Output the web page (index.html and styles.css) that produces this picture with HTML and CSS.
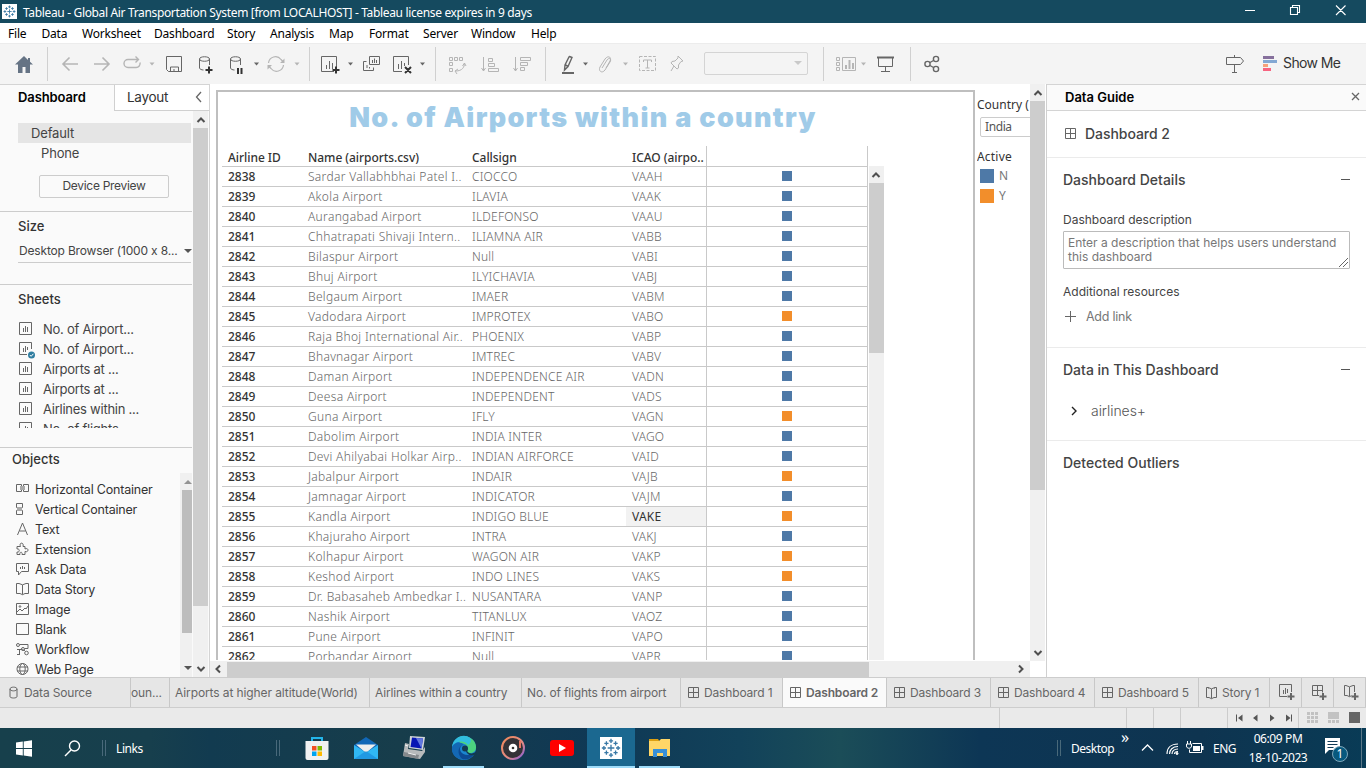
FILE: index.html
```html
<!DOCTYPE html>
<html lang="en">
<head>
<meta charset="utf-8">
<title>Tableau - Global Air Transportation System</title>
<link rel="stylesheet" href="styles.css">
</head>
<body>
<svg class="defs" width="0" height="0">
  <symbol id="logo" viewBox="0 0 24 24"><path d="M12 8v8M8 12h8M12 1v5M9.500 3.500h5M12 18v5M9.500 20.500h5M1 12h5M3.500 9.500v5M18 12h5M20.500 9.500v5M6.500 4v5M4 6.500h5M17.500 4v5M15 6.500h5M6.500 15v5M4 17.500h5M17.500 15v5M15 17.500h5"/></symbol>
  <symbol id="sheet" viewBox="0 0 14 14"><path d="M.5.5h12v12H.5zM4.500 6v4M6.500 4v6M8.500 5v5"/></symbol>
  <symbol id="grid" viewBox="0 0 13 13"><path d="M1.500 1.500h10v10h-10zM6.500 1.500v10M1.500 6.500h10"/></symbol>
  <symbol id="book" viewBox="0 0 13 14"><path d="M3 1.500H1.500v10H4l2.500 1.200L9 11.500h2.500v-10H10M3 1.500l3.500 1.300L10 1.500M6.500 3v9.500M3.500 1.500v1M9.500 1.500v1"/></symbol>
  <symbol id="up" viewBox="0 0 10 8"><path d="M1.500 6 5 2.500 8.500 6"/></symbol>
</svg>
<div class="app">
  <header class="titlebar">
    <span class="app-icon"><svg width="13" height="13"><use href="#logo"/></svg></span>
    <span class="title-text">Tableau - Global Air Transportation System [from LOCALHOST] - Tableau license expires in 9 days</span>
    <svg class="winbtns" width="116" height="23" viewBox="0 0 116 23"><path d="M0 10.500h10M45.500 7.500h7v7h-7zM47.500 7V5.500h7v7H53M91 5.500l9.500 9.500M100.500 5.500 91 15"/></svg>
  </header>
  <nav class="menubar"><span class="m1">File</span><span class="m2">Data</span><span class="m3">Worksheet</span><span class="m4">Dashboard</span><span class="m5">Story</span><span class="m6">Analysis</span><span class="m7">Map</span><span class="m8">Format</span><span class="m9">Server</span><span class="m10">Window</span><span class="m11">Help</span></nav>
  <div class="toolbar">
    <svg class="home" width="48" height="41" viewBox="0 0 48 41"><path d="M24 13 15 21.500h3V30h4.500v-6h3v6H30v-8.500h3l-3-2.700V15h-2v2z"/><path class="sep" d="M47.500 4v34"/></svg>
    <svg class="t dim" width="109" height="41" viewBox="48 0 109 41"><g stroke-width="1.600"><path d="M78 21H63m6.500-6.500L63 21l6.500 6.500M94 21h15m-6.500-6.500L109 21l-6.500 6.500"/></g><path stroke-width="1.400" d="M130 16.500h-2a4 4 0 0 0 0 8h8a4 4 0 0 0 4-5M128 16.500h10.500m-3-3 3 3-3 3"/><path class="f" d="M149.500 19.500h5l-2.500 3z"/></svg>
    <svg class="t" width="100" height="41" viewBox="157 0 100 41"><path d="M166.500 13.500h15v15h-13l-2-2zM170.500 28v-4h8v4M174 26v2M205.500 16v9c0 1 2 2 4 2" class="hide"/><path d="M166.500 13.500h15v15h-13l-2-2zM170.500 28v-4h8v4M174 26v2M199.500 16v9c0 1 2 2 4 2M209.500 16v6M199.500 16c0-3 10-3 10 0s-10 3-10 0M230.500 16v9c0 1 2 2 4 2M240.500 16v6M230.500 16c0-3 10-3 10 0s-10 3-10 0"/><path class="bold" d="M209 23.500v7M205.500 27h7M238 25v6M241.500 25v6"/><path class="f" d="M254 19.500h5l-2.500 3z"/></svg>
    <svg class="t dim" width="53" height="41" viewBox="257 0 53 41"><path class="dark f" d="M257 19.500h2l-2.500 3z"/><path stroke-width="1.200" d="M268.500 20a7 7 0 0 1 12.500-3.500l2 2M283.500 22a7 7 0 0 1-12.500 3.500l-2-2"/><path class="f" d="M284.500 15.500v4.500H280zM267.500 26.500V22h4.500z"/><path class="f" d="M294.500 19.500h5l-2.500 3z"/><path class="sep" d="M309.500 4v34"/></svg>
    <svg class="t" width="126" height="41" viewBox="310 0 126 41"><path d="M334 28.500h-12.500v-15h15V24M326.500 22v4M329.500 18v8M332.500 20v6M366.500 18.500h-3v9h10v-3M369.500 13.500h10v8h-10zM372.500 17v3M374.500 15.500v4.500M376.500 17v3M367 22v3M369.500 24v1.500M402 28.500h-8.500v-15h15V22M398.500 21v5M401.500 18v8M404.500 20v3"/><path class="bold" d="M336 23.500v7M332.500 27h7M405 24l6 6M411 24l-6 6"/><path class="f" d="M348 19.500h5l-2.500 3zM420 19.500h5l-2.500 3z"/><path class="sep" d="M435.500 4v34"/></svg>
    <svg class="t dim" width="110" height="41" viewBox="436 0 110 41"><path d="M449.500 14.500h3v3h-3zM454.500 14.500h3v3h-3zM459.500 14.500h3v3h-3zM449.500 19.500h3v3h-3zM449.500 25.500h3v3h-3zM464.500 20c0 4-2 8-9 8m7-5 2-3 1.500 3M458 26l-3 2 2 3M483.500 14v14m-2-3 2 3 2-3M488.500 15.500h4v3h-4zM488.500 20.500h6v3h-6zM488.500 25.500h10v3h-10zM515.500 14v14m-2-3 2 3 2-3M520.500 14.500h10v3h-10zM520.500 19.500h7v3h-7zM520.500 24.500h4v3h-4z"/><path class="sep" d="M545.500 4v34"/></svg>
    <svg class="t" width="44" height="41" viewBox="546 0 44 41"><path stroke-width="1.400" d="M569.500 13.500l2.500 1-4 9-3.500 3.500.5-5 4-8zM565.500 22l3 1.500"/><path stroke-width="2" d="M562 30h12"/><path class="f" d="M583 19.500h5l-2.500 3z"/></svg>
    <svg class="t dim" width="110" height="41" viewBox="590 0 110 41"><path d="M602 25l5-8c2-3 5-1 3 2l-5 8c-3 4-7 1-5-3l5-8c3-4 7-2 5 2l-4 7"/><path class="f" d="M623 19.500h5l-2.500 3z"/><path stroke-dasharray="3 1.500" d="M639.500 13.500h16v14h-16z"/><path d="M643.500 19v-2h8v2M647.500 17v8M645.500 25h4M678 13l5 5-2 .5-2.500 3.500v3l-1.500 1-6-6 1-1.500 3-.5 3-3zM674 23 671 28"/></svg>
    <div class="combo"><i></i></div>
    <svg class="t dim" width="60" height="41" viewBox="808 0 60 41"><path class="sep" d="M823.500 4v34"/><path d="M836.500 14.500h3v3h-3zM836.500 19.500h3v3h-3zM836.500 24.500h3v3h-3zM842.500 14.500h13v13h-13z"/><path stroke-width="2" d="M846 22v4M849.500 17v9M853 20v6"/><path class="f" d="M861 19.500h5l-2.500 3z"/></svg>
    <svg class="t" width="90" height="41" viewBox="868 0 90 41"><path stroke-width="2" d="M877 14.500h17"/><path d="M878.500 15v8.500h14V15M885.500 24v4M881 28.500h9"/><path class="sep" d="M910.500 4v34"/><g stroke-width="1.400"><circle cx="927.500" cy="21" r="2.600"/><circle cx="936" cy="16" r="2.600"/><circle cx="936" cy="26" r="2.600"/><path d="M930 19.500l3.500-2M930 22.500l3.500 2"/></g></svg>
    <svg class="t guide" width="22" height="41" viewBox="1224 0 22 41"><path d="M1226.500 14.500h14l3 3.500-3 3.500h-14zM1234.500 12v2M1234.500 22v7M1232 29.500h5"/></svg>
    <svg class="show" width="14" height="41" viewBox="0 0 14 41"><path fill="#86709c" d="M0 13h11v3H0z"/><path fill="#83a8d3" d="M0 17h14v3H0z"/><path fill="#f5a17a" d="M0 21h5v3H0z"/><path fill="#f76480" d="M0 25h8v3H0z"/></svg>
    <span class="showme">Show Me</span>
  </div>

  <main class="work">
    <aside class="left">
      <div class="ltabs"><b>Dashboard</b><div class="ltab2">Layout<svg class="ln" width="8" height="12"><path stroke-width="1.300" d="M6 1 1.500 6 6 11"/></svg></div></div>
      <div class="lbody">
        <div class="lcontent">
          <section class="devices"><div class="dev sel">Default</div><div class="dev phone">Phone</div><div class="preview">Device Preview</div></section>
          <section class="size"><h3>Size</h3><div class="sizebox"><span>Desktop Browser (1000 x 8...</span><i class="tri"></i></div></section>
          <section class="sheets"><h3>Sheets</h3>
            <div class="sheetlist">
              <div><svg class="ln" width="14" height="14"><use href="#sheet"/></svg><span>No. of Airport...</span></div>
              <div class="used"><svg class="ln" width="18" height="18" viewBox="0 0 18 18"><path d="M8 12.500H.5V.5h12V7M4.500 6v4M6.500 4v6M8.500 5v3"/><circle cx="12.500" cy="13" r="3.500" fill="#2f7da0" stroke="none"/><path d="m10.800 13 1.300 1.300 2.300-2.500" stroke="#fff"/></svg><span>No. of Airport...</span></div>
              <div><svg class="ln" width="14" height="14"><use href="#sheet"/></svg><span>Airports at ...</span></div>
              <div><svg class="ln" width="14" height="14"><use href="#sheet"/></svg><span>Airports at ...</span></div>
              <div><svg class="ln" width="14" height="14"><use href="#sheet"/></svg><span>Airlines within ...</span></div>
              <div><svg class="ln" width="14" height="14"><use href="#sheet"/></svg><span>No. of flights ...</span></div>
            </div>
          </section>
          <section class="objects">
            <div class="objmain"><h3>Objects</h3>
              <div class="obj"><svg class="ln" width="14" height="14"><path d="M.5 2.500h5v7h-5zM7.500 2.500h5v7h-5z"/><path fill="#aaa" stroke="none" d="M4 4h5v4H4z"/></svg>Horizontal Container</div>
              <div class="obj"><svg class="ln" width="14" height="14"><path d="M.5 1.500h6v4h-6zM.5 8.500h6v4h-6z"/><path fill="#aaa" stroke="none" d="M1 5h5v4H1z"/></svg>Vertical Container</div>
              <div class="obj"><svg class="ln" width="14" height="14"><path d="M1.500 13 6.500 1l5 12M3.500 9h6"/></svg>Text</div>
              <div class="obj"><svg class="ln" width="14" height="14"><path d="M1 4.500h3.500c-2-4.500 4-4.500 2.500 0h2V7c4-2 4 4 0 2.500v3H6c1-3-3-3-2 0H1V10c3 1 3-4 0-3z"/></svg>Extension</div>
              <div class="obj"><svg class="ln" width="14" height="14"><path d="M.5 1.500h12v8h-7L2.500 13V9.500h-2zM4.500 5v2M6.500 4v3M8.500 5v2"/></svg>Ask Data</div>
              <div class="obj"><svg class="ln" width="14" height="14"><path d="M3 1.500H.5v10H4l2.500 1.200L9 11.500h3.500v-10H10M3 1.500l3.500 1.300L10 1.500M6.500 3v9.500"/></svg>Data Story</div>
              <div class="obj"><svg class="ln" width="14" height="14"><path d="M.5 1.500h12v11H.5zM1 10l3-3 2 2 3-3 1 1 2-3"/><circle cx="4" cy="4.500" r=".8"/></svg>Image</div>
              <div class="obj"><svg class="ln" width="14" height="14"><path d="M.5 1.500h12v11H.5z"/></svg>Blank</div>
              <div class="obj"><svg class="ln" width="14" height="14"><circle cx="2" cy="3" r="1.500"/><path d="M4 2.500h8v4H9M1 7.500h4l4 1M3.500 8v5M1 12.500h3"/><circle cx="7" cy="7" r="1.500"/><circle cx="10.500" cy="11" r="1.800"/></svg>Workflow</div>
              <div class="obj"><svg class="ln" width="14" height="14"><circle cx="6.500" cy="7" r="5.500"/><ellipse cx="6.500" cy="7" rx="2.700" ry="5.500"/><path d="M1 5h11M1 9h11"/></svg>Web Page</div>
            </div>
            <div class="minibar"><i class="tri upt"></i><div class="minithumb"></div><i class="tri"></i></div>
          </section>
        </div>
        <div class="vbar"><svg class="arw" width="10" height="8"><use href="#up"/></svg><div class="vthumb lt"></div><svg class="arw flip" width="10" height="8"><use href="#up"/></svg></div>
      </div>
    </aside>

    <section class="center">
      <div class="viewport">
        <div class="canvas">
          <div class="frame">
            <h1><span>No. of Airports within a country</span></h1>
            <div class="viz">
              <table>
                <colgroup><col class="c1"><col class="c2"><col class="c3"><col class="c4"><col class="c5"></colgroup>
                <thead><tr><th>Airline ID</th><th>Name (airports.csv)</th><th>Callsign</th><th>ICAO (airpo..</th><th></th></tr></thead>
                <tbody>
                <tr><th>2838</th><td>Sardar Vallabhbhai Patel I..</td><td>CIOCCO</td><td>VAAH</td><td><i></i></td></tr>
                <tr><th>2839</th><td>Akola Airport</td><td>ILAVIA</td><td>VAAK</td><td><i></i></td></tr>
                <tr><th>2840</th><td>Aurangabad Airport</td><td>ILDEFONSO</td><td>VAAU</td><td><i></i></td></tr>
                <tr><th>2841</th><td>Chhatrapati Shivaji Intern..</td><td>ILIAMNA AIR</td><td>VABB</td><td><i></i></td></tr>
                <tr><th>2842</th><td>Bilaspur Airport</td><td>Null</td><td>VABI</td><td><i></i></td></tr>
                <tr><th>2843</th><td>Bhuj Airport</td><td>ILYICHAVIA</td><td>VABJ</td><td><i></i></td></tr>
                <tr><th>2844</th><td>Belgaum Airport</td><td>IMAER</td><td>VABM</td><td><i></i></td></tr>
                <tr class="y"><th>2845</th><td>Vadodara Airport</td><td>IMPROTEX</td><td>VABO</td><td><i></i></td></tr>
                <tr><th>2846</th><td>Raja Bhoj International Air..</td><td>PHOENIX</td><td>VABP</td><td><i></i></td></tr>
                <tr><th>2847</th><td>Bhavnagar Airport</td><td>IMTREC</td><td>VABV</td><td><i></i></td></tr>
                <tr><th>2848</th><td>Daman Airport</td><td>INDEPENDENCE AIR</td><td>VADN</td><td><i></i></td></tr>
                <tr><th>2849</th><td>Deesa Airport</td><td>INDEPENDENT</td><td>VADS</td><td><i></i></td></tr>
                <tr class="y"><th>2850</th><td>Guna Airport</td><td>IFLY</td><td>VAGN</td><td><i></i></td></tr>
                <tr><th>2851</th><td>Dabolim Airport</td><td>INDIA INTER</td><td>VAGO</td><td><i></i></td></tr>
                <tr><th>2852</th><td>Devi Ahilyabai Holkar Airp..</td><td>INDIAN AIRFORCE</td><td>VAID</td><td><i></i></td></tr>
                <tr class="y"><th>2853</th><td>Jabalpur Airport</td><td>INDAIR</td><td>VAJB</td><td><i></i></td></tr>
                <tr><th>2854</th><td>Jamnagar Airport</td><td>INDICATOR</td><td>VAJM</td><td><i></i></td></tr>
                <tr class="y"><th>2855</th><td>Kandla Airport</td><td>INDIGO BLUE</td><td class="hot">VAKE</td><td><i></i></td></tr>
                <tr><th>2856</th><td>Khajuraho Airport</td><td>INTRA</td><td>VAKJ</td><td><i></i></td></tr>
                <tr class="y"><th>2857</th><td>Kolhapur Airport</td><td>WAGON AIR</td><td>VAKP</td><td><i></i></td></tr>
                <tr class="y"><th>2858</th><td>Keshod Airport</td><td>INDO LINES</td><td>VAKS</td><td><i></i></td></tr>
                <tr><th>2859</th><td>Dr. Babasaheb Ambedkar I..</td><td>NUSANTARA</td><td>VANP</td><td><i></i></td></tr>
                <tr><th>2860</th><td>Nashik Airport</td><td>TITANLUX</td><td>VAOZ</td><td><i></i></td></tr>
                <tr><th>2861</th><td>Pune Airport</td><td>INFINIT</td><td>VAPO</td><td><i></i></td></tr>
                <tr><th>2862</th><td>Porbandar Airport</td><td>Null</td><td>VAPR</td><td><i></i></td></tr>
                </tbody>
              </table>
              <div class="vbar tablebar"><svg class="arw" width="10" height="8"><use href="#up"/></svg><div class="vthumb tt"></div></div>
            </div>
          </div>
          <div class="legend"><div class="lh">Country (</div><div class="sel-in">India</div><div class="lh act">Active</div><div class="li"><i></i>N</div><div class="li yy"><i></i>Y</div></div>
        </div>
        <div class="vbar"><svg class="arw" width="10" height="8"><use href="#up"/></svg><div class="vthumb ct"></div><svg class="arw flip" width="10" height="8"><use href="#up"/></svg></div>
      </div>
      <div class="hbar"><svg class="arw lft" width="10" height="8"><use href="#up"/></svg><div class="hthumb"></div><svg class="arw rgt" width="10" height="8"><use href="#up"/></svg></div>
    </section>

    <aside class="guidepane">
      <div class="ghead"><b>Data Guide</b><svg class="ln" width="9" height="9"><path stroke-width="1.300" d="m1 1 7 7M8 1 1 8"/></svg></div>
      <div class="gname"><svg class="ln" width="13" height="13"><use href="#grid"/></svg><span>Dashboard 2</span></div>
      <div class="gsec det"><h2><span>Dashboard Details</span><i></i></h2><p>Dashboard description</p><div class="ta">Enter a description that helps users understand this dashboard<svg class="ln" width="9" height="9"><path d="M0 9 9 0M4 9l5-5"/></svg></div><p>Additional resources</p><div class="add"><svg class="ln" width="12" height="12"><path d="M6.500 1v11M1 6.500h11"/></svg>Add link</div></div>
      <div class="gsec dat"><h2><span>Data in This Dashboard</span><i></i></h2><div class="src"><svg class="ln" width="6" height="10"><path d="m1 1 4 4-4 4" stroke="#222" stroke-width="1.400"/></svg>airlines+</div></div>
      <div class="gsec out"><h2><span>Detected Outliers</span></h2></div>
    </aside>
  </main>

  <div class="tabs">
    <div class="ds"><svg class="ln" width="10" height="13"><path d="M1 3v7.500c0 2 7 2 7 0V3M1 3c0-2.500 7-2.500 7 0s-7 2.500-7 0"/></svg>Data Source</div>
    <div class="w39">oun...</div><div class="w200">Airports at higher altitude(World)</div><div class="w151">Airlines within a country</div><div class="w160">No. of flights from airport</div>
    <div class="w102"><svg class="ln" width="13" height="13"><use href="#grid"/></svg>Dashboard 1</div>
    <div class="w104 on"><svg class="ln" width="13" height="13"><use href="#grid"/></svg>Dashboard 2</div>
    <div class="w104"><svg class="ln" width="13" height="13"><use href="#grid"/></svg>Dashboard 3</div>
    <div class="w104"><svg class="ln" width="13" height="13"><use href="#grid"/></svg>Dashboard 4</div>
    <div class="w104"><svg class="ln" width="13" height="13"><use href="#grid"/></svg>Dashboard 5</div>
    <div class="w71"><svg class="ln" width="13" height="14"><use href="#book"/></svg>Story 1</div>
    <div class="w32"><svg class="ln" width="17" height="17"><path d="M8 12.500H.5V.5h12V8M4.500 6v4M6.500 4v6M8.500 5v4"/><path stroke-width="2" d="M12 9v7M8.500 12.500h7"/></svg></div>
    <div class="w32"><svg class="ln" width="17" height="17"><path d="M8 11.500H1.500V1.500h10v7M6.500 1v11M1 6.500h11"/><path stroke-width="2" d="M12 9v7M8.500 12.500h7"/></svg></div>
    <div class="w32"><svg class="ln" width="17" height="17"><path d="M3 1.500H1.500v10H4l2.500 1.200 2-1M3 1.500l3.500 1.300L10 1.500h1.500V8M6.500 3v9.500"/><path stroke-width="2" d="M12 9v7M8.500 12.500h7"/></svg></div>
  </div>
  <div class="status"><div class="s1"></div><div class="s2"></div><div class="s3"></div><div class="s3"></div><div class="s4"></div>
    <div class="s5"><svg width="58" height="10"><path d="M1 1.500h1v7H1zM7.500 1.500v7L3 5zM22.500 1.500v7L18 5zM35 1.500v7L39.500 5zM51 1.500v7L55.500 5zM56 1.500h1v7h-1z"/></svg></div>
    <svg width="54" height="12" viewBox="0 0 54 12"><path fill="#c2c2c2" d="M0 0h3v3H0zM4 0h3v3H4zM8 0h3v3H8zM0 4h3v3H0zM4 4h3v3H4zM8 4h3v3H8zM0 8h3v3H0zM4 8h3v3H4zM8 8h3v3H8zM21 0h11v7H21zM21 8h3v3h-3zM25 8h3v3h-3zM29 8h3v3h-3z"/><path fill="#666" d="M42 0h11v11H42z"/></svg>
  </div>

  <footer class="taskbar">
    <svg class="start" width="17" height="17" viewBox="0 0 17 17"><path fill="#fff" d="M0 2.500 6.800 1.600V8H0zM7.700 1.500 16 .3V8H7.700zM0 8.900h6.800v6.500L0 14.500zM7.700 8.900H16v7.800l-8.300-1.200z"/></svg>
    <svg class="search" width="17" height="17" viewBox="0 0 17 17"><circle cx="10.500" cy="6" r="5"/><path d="M7 10 1 16"/></svg>
    <i class="grip g1"></i><span class="links">Links</span><i class="grip g2"></i>
    <div class="app-btn"><svg width="26" height="26" viewBox="0 0 26 26"><path d="M8 7V3h10v4" fill="none" stroke="#23b5ea" stroke-width="2"/><path fill="#f1f1f1" d="M1.500 6h23v17a2 2 0 0 1-2 2h-19a2 2 0 0 1-2-2z"/><path fill="#f25022" d="M8 11h4.500v4.500H8z"/><path fill="#7fba00" d="M13.500 11H18v4.500h-4.500z"/><path fill="#00a4ef" d="M8 16.500h4.500V21H8z"/><path fill="#ffb900" d="M13.500 16.500H18V21h-4.500z"/></svg></div>
    <div class="app-btn"><svg width="26" height="26" viewBox="0 0 26 26"><path fill="#1167b7" d="M1 10 13 2l12 8v6H1z"/><path fill="#eee" d="M3 9.500h20L13 18z"/><path fill="#30b7f3" d="M1 10l12 7.500L25 10v14H1z"/><path fill="#1686d9" d="M1 24 13 16l12 8z" opacity=".6"/></svg></div>
    <div class="app-btn pc"><svg width="26" height="26" viewBox="0 0 26 26"><path fill="#cfd4d8" d="m9 1 15 1-2 13-14-2z"/><path fill="#0716b4" d="m11 2.500 11 1-1.500 10-11-1.500z"/><path fill="#6178df" d="m15 3 7 .5-1.500 10z"/><path fill="#b7babb" d="m4 8 4 1-1 5 14 2 3-4v5l-5 7-17-3z"/><path fill="#85898c" d="m3 17 15 3-1 4-15-3z"/><path stroke="#f4f4f4" d="m4 10 3 1M7 18l8 2"/></svg></div>
    <div class="app-btn run"><svg width="26" height="26" viewBox="0 0 26 26"><circle cx="13" cy="13" r="12" fill="#1b86d0"/><path fill="#4cd27f" d="M6 3.300C14-2 26 4 25 13c-.5 5-6 6-9 4 3-5-1-9-7-9z"/><path fill="#31bddf" d="M1 12C2 2 13-2 19 3c2 3 0 6-2 7C13 4 4 6 1 12z"/><path fill="#1468b4" d="M1 12c2-5 9-6 12-2-6 1-6 9 0 14C6 25 0 20 1 12z"/><path fill="#0c4a94" d="M10 11c-3 4 1 12 13 8-3 5-8 6-11 5.500C7 21 6 14 10 11z"/><circle cx="14" cy="13.500" r="3" fill="#123a50"/><path fill="#123a50" d="m15 15 3 3c3 1 5 0 8-2v3l-3 1c-4 1-8-1-8-5z"/></svg></div>
    <div class="app-btn"><svg width="26" height="26" viewBox="0 0 26 26"><defs><linearGradient id="ring" x2="1" y2="1"><stop stop-color="#f18959"/><stop offset=".6" stop-color="#e28a85"/><stop offset="1" stop-color="#8059dc"/></linearGradient></defs><circle cx="13" cy="13" r="11" fill="#333237" stroke="url(#ring)" stroke-width="2"/><path stroke="#e77662" stroke-width="2" d="M20 6v7"/><circle cx="13" cy="13" r="4.300" fill="#fff"/><circle cx="13" cy="13" r="1.300" fill="#333"/></svg></div>
    <div class="app-btn"><svg width="26" height="26" viewBox="0 0 26 26"><rect x="1" y="5" width="24" height="16" rx="3" fill="#f00"/><path fill="#fff" d="m10 9 7 4-7 4z"/></svg></div>
    <div class="app-btn run active"><span class="tb"><svg width="20" height="20"><use href="#logo"/></svg></span></div>
    <div class="app-btn run"><svg width="26" height="26" viewBox="0 0 26 26"><path fill="#dda013" d="M2 4h9l2 3H2z"/><path fill="#ffd667" d="M2 6h10l2-2h9v17H2z"/><path fill="#3790d8" d="M6 14h14v8h-4v-4h-6v4H6z"/></svg></div>
    <div class="tray"><i class="grip"></i><span class="desk">Desktop</span><span class="more">»</span>
      <svg class="sys" width="66" height="20" viewBox="0 0 66 20"><path stroke-width="1.300" d="m1 12.500 5.500-5.500 5.500 5.500"/><path d="M26 16c0-6 4-10 11-10M28.500 16c0-4 3-7.500 8.500-7.500M31 16c0-3 2-5 6-5M33.500 16c0-2 1-2.500 3.500-2.500" stroke-width="1.100"/><circle cx="36" cy="15.500" r="1" fill="#fff"/><path d="M51.500 5.500h9v9h-12v-3M49.500 3v3M46.500 3v3M45.500 6h5v2c0 3-5 3-5 0z"/><path fill="#fff" stroke="none" d="M52 8h7v5h-7zM61 8h1.500v4H61z"/></svg>
      <span class="eng">ENG</span><span class="clock">06:09 PM<br>18-10-2023</span>
      <svg class="note" width="24" height="26" viewBox="0 0 24 26"><path fill="#fff" d="M1 1h15v12H5l-4 4z"/><path stroke="#123a55" d="M3.500 4.500h10M3.500 7.500h10M3.500 10.500h6"/><circle cx="16" cy="17" r="7.500" fill="#07597e" stroke="#7fa8bb"/><text x="16" y="21">1</text></svg>
      <i class="peek"></i>
    </div>
  </footer>
</div>
</body>
</html>
```
FILE: styles.css
```css
*{box-sizing:border-box}
body{margin:0;font-family:Inter,"Noto Sans",sans-serif;font-size:13px;color:#444;overflow:hidden}
h1,h2,h3,p{margin:0;font-weight:500}
svg{display:block;flex:none}
.defs{position:absolute}
.hide{display:none}
i{display:block;flex:none}
.app{width:1366px;height:768px;display:flex;flex-direction:column;background:#fff;overflow:hidden;white-space:nowrap}
.titlebar{height:23px;flex:none;background:#154a5f;color:#fff;display:flex;align-items:center;font:12px "Noto Sans",sans-serif;padding-left:2px}
.app-icon{width:15px;height:15px;background:#fff;padding:1px;flex:none}
.app-icon svg,.tb svg{stroke:#3878a5;stroke-width:1.600}
.title-text{margin-left:6px;width:520px;letter-spacing:-.345px;padding-top:1px}
.winbtns{margin-left:702px;fill:none;stroke:#fff;stroke-width:1.100}
.menubar{height:20px;flex:none;display:flex;align-items:center;color:#000;font:12px "Noto Sans",sans-serif;letter-spacing:-.2px;padding-left:8px}
.menubar span{flex:none}
.m1{width:33.500px}.m2{width:40.500px}.m3{width:72px}.m4{width:73px}.m5{width:43px}.m6{width:59px}.m7{width:40px}.m8{width:54px}.m9{width:48px}.m10{width:60px}
.toolbar{height:41px;flex:none;background:#f4f4f4;border-top:1px solid #ececec;display:flex;align-items:center;padding-bottom:2px}
.home{fill:#657384}
.t,.ln{fill:none;stroke:#666;stroke-width:1}
.t .f{fill:#666;stroke:none}
.dim{stroke:#b5b5b5}
.dim .f{fill:#b5b5b5}
.t .dark{fill:#666}
.t .bold{stroke:#333;stroke-width:2}
.toolbar .sep{fill:none;stroke:#d0d0d0;stroke-width:1}
.combo{width:104px;height:23px;margin:0 0 0 4px;border:1px solid #d4d4d4;border-radius:2px;display:flex;justify-content:flex-end;align-items:center;padding-right:5px}
.combo i{border:4px solid transparent;border-top-color:#c9c9c9;border-bottom:0}
.guide{margin-left:266px}
.show{margin-left:17px}
.showme{margin-left:6px;font-size:14px;color:#333;letter-spacing:-.600px;word-spacing:0;padding-bottom:1px}
.work{height:593px;flex:none;display:flex}
.left{width:210px;flex:none;background:#fafafa;border-right:1px solid #d4d4d4;border-top:1px solid #d4d4d4}
.ltabs{height:26px;display:flex}
.ltabs b{width:114px;padding-left:18px;font:600 13px/24px Inter,sans-serif;color:#000;letter-spacing:-.1px}
.ltab2{flex:1;background:#fff;border-left:1px solid #d0d0d0;border-bottom:1px solid #d0d0d0;display:flex;align-items:center;justify-content:space-between;padding:0 6px 1px 12px;color:#333;font-size:13.500px;letter-spacing:-.3px}
.lbody{height:566px;display:flex}
.lcontent{width:193px;overflow:hidden}
.devices{height:101px;padding:12px 1px 0 18px;margin-right:1px;border-bottom:1px solid #ccc}
.dev{height:20px;line-height:20px;padding-left:13px;letter-spacing:-.15px}
.sel{background:#e5e5e5}
.phone{padding-left:23px}
.preview{width:130px;height:23px;margin:12px 0 0 21px;border:1px solid #ccc;border-radius:2px;text-align:center;font-size:12px;line-height:20px;letter-spacing:-.3px}
h3{font-size:13px;color:#333;line-height:20px}
.size{height:73px;margin-right:1px;border-bottom:1px solid #ccc;padding:4px 1px 0 18px}
.sizebox{height:23px;margin-top:4px;border-bottom:1px solid #ccc;display:flex;align-items:center;justify-content:space-between;font-size:12px;letter-spacing:-.17px;padding:0 0 1px 1px}
.tri{border:4px solid transparent;border-top-color:#555;border-bottom:0}
.sizebox .tri{margin-right:-1px}
.upt{transform:rotate(180deg);opacity:.6}
.sheets{height:163px;padding:4px 1px 0 18px;margin-right:1px;border-bottom:1px solid #ccc}
.sheetlist{height:109px;margin-top:10px;overflow:hidden}
.sheetlist>div{height:20px;display:flex;align-items:center;padding-left:1px;letter-spacing:-.25px}
.sheetlist svg{margin-right:10px}
.used svg{margin:4px 6px 0 0}
.objects{height:229px;display:flex}
.objmain{width:180px;padding:1px 0 0 12px}
.objmain h3{margin-bottom:10px}
.obj{height:20px;display:flex;align-items:center;font-size:12.500px;color:#333;padding-left:4px;letter-spacing:-.2px}
.obj svg{margin-right:5px}
.minibar{width:12px;height:204px;margin-top:25px;background:#f0f0f0;display:flex;flex-direction:column;align-items:flex-end;padding:7px 0 6px}
.minithumb{width:10px;height:143px;background:#bdbdbd;margin:6px 0 33px}
.vbar{width:15px;flex:none;background:#f0f0f0;display:flex;flex-direction:column;align-items:center;padding-top:5px}
.arw{fill:none;stroke:#505050;stroke-width:2}
.vthumb{width:100%;background:#cdcdcd;margin-top:4px}
.lt{height:478px}
.flip{transform:rotate(180deg);margin-top:auto;margin-bottom:4px}
.center{width:837px;height:593px;flex:none;border-right:1px solid #d0d0d0;background:#fff}
.viewport{height:577px;display:flex;padding-left:6px}
.canvas{width:814px;display:flex;overflow:hidden;height:576px}
.frame{width:759px;height:570px;margin-top:6px;flex:none;border:2px solid #bfbfbf;border-bottom:0;overflow:hidden;padding-left:4px}
h1{height:54px;text-align:center;padding-right:29px;font:900 27px/52px Inter,sans-serif;color:#a0cbe8;letter-spacing:1.310px}
.viz{display:flex}
table{width:645px;table-layout:fixed;border-collapse:collapse;font:12px "Noto Sans",sans-serif;flex:none}
.c1{width:80px}.c2{width:164px}.c3{width:160px}.c4{width:80px}.c5{width:161px}
tr{height:20px}
th,td{padding:0 0 0 6px;height:20px;line-height:19px;text-align:left;border-bottom:1px solid #c9c9c9;overflow:hidden;font-weight:500;color:#333}
thead th{padding-top:4px;line-height:15px;letter-spacing:-.05px}
td{color:#666;font-weight:300;letter-spacing:.2px}
td:nth-child(2){letter-spacing:.32px}
tr>:nth-child(4),tr>:nth-child(5){border-right:1px solid #c9c9c9}
td:last-child{padding:0}
td i{width:10px;height:10px;background:#4e79a7;margin:0 auto}
.y i{background:#f28e2b}
.hot{background:#f2f2f2;color:#333;font-weight:400}
.tablebar{height:500px;margin:20px 0 0 1px}
.tt{height:170px}
.legend{width:53px;margin-left:2px;padding-top:11px;overflow:hidden;font:12px/20px "Noto Sans",sans-serif;color:#333}
.sel-in{width:80px;height:20px;border:1px solid #ccc;border-radius:2px;margin:2px 0 0 3px;line-height:18px;padding-left:4px;color:#555;letter-spacing:-.400px}
.act{margin-top:10px;letter-spacing:.2px}
.li{height:20px;display:flex;align-items:center;color:#777;padding-left:3px;font-size:12px}
.li i{width:14px;height:14px;background:#4e79a7;margin-right:5px}
.act+.li{margin-top:-1px}
.li.yy i{background:#f28e2b}
.ct{height:389px}
.hbar{height:16px;width:820px;background:#f0f0f0;display:flex;align-items:center;padding:0 4px 0 3px}
.lft{transform:rotate(-90deg)}
.rgt{transform:rotate(90deg);margin-left:auto}
.hthumb{width:642px;height:15px;background:#cdcdcd;margin-left:4px}
.guidepane{flex:1;border-top:1px solid #d4d4d4;color:#444}
.ghead{height:26px;background:#fafafa;border-bottom:1px solid #d4d4d4;display:flex;align-items:center;justify-content:space-between;padding:0 6px 2px 18px;color:#000}
.ghead b{font-weight:600;font-size:13px}
.gname{height:47px;display:flex;align-items:center;gap:8px;padding:0 0 2px 17px;font-size:14px;font-weight:500;border-bottom:1px solid #ebebeb;letter-spacing:-.05px}
.gsec{padding:0 16px;border-bottom:1px solid #ebebeb}
.gsec h2{height:44px;display:flex;align-items:center;justify-content:space-between;font-size:14px;padding-bottom:2px}
h2 i{width:9px;height:1px;background:#555}
.det{height:190px}
.gsec p{font-size:12px;line-height:18px;font-weight:400}
.det p:first-of-type{margin-top:9px}
.ta{height:38px;width:287px;margin:2px 0 14px;border:1px solid #bbb;border-radius:1px;padding:4px;font-size:12px;line-height:14px;color:#777;white-space:normal;position:relative}
.ta svg{position:absolute;right:1px;bottom:1px}
.add{display:flex;align-items:center;height:30px;gap:10px;color:#777;font-size:12.500px;padding-left:1px;letter-spacing:-.25px}
.dat{height:93px}
.src{height:37px;display:flex;align-items:center;gap:14px;padding-left:8px;font-size:14px;font-weight:300;color:#555;letter-spacing:-.05px}
.out{border:0}
.tabs{height:31px;flex:none;display:flex;background:#e6e6e6;border-top:1px solid #cdcdcd;border-bottom:1px solid #cdcdcd;font-size:12px;color:#666;letter-spacing:-.16px}
.tabs>div{flex:none;border-right:1px solid #c8c8c8;display:flex;align-items:center;gap:4px;padding-left:6px;overflow:hidden}
.tabs .ds{width:131px;padding-left:9px;gap:5px}
.tabs .w39{width:39px;padding-left:0}
.tabs .w200,.tabs .w151,.tabs .w160{padding-left:5px}
.tabs .w200{letter-spacing:-.1px}
.w200{width:200px}.w151{width:152px}.w160{width:159px}.w102{width:102px}.w104{width:104px}.w71{width:71px}
.tabs .w32{width:32px;padding-left:9px}
.tabs .on{background:#fafafa;font-weight:600;padding-bottom:1px}
.status{height:20px;flex:none;background:#eaeaea;display:flex;align-items:center}
.status>div{height:100%;border-right:1px solid #ccc;flex:none}
.status>svg{margin-left:8px}
.s1{width:1000px}.s2{width:127px}.s3{width:27px}.s4{width:47px}
.s5{width:71px;display:flex;align-items:center;padding:0 0 1px 7px;fill:#555}
.taskbar{height:40px;flex:none;display:flex;align-items:center;color:#fff;font:12px "Noto Sans",sans-serif;background:linear-gradient(90deg,#17404c 0,#173f4d 150px,#123b50 210px,#173d4b 400px,#0f3855 600px,#12425a 740px,#1b4d58 840px,#0d3655 980px,#0e3450 1200px,#093b56)}
.start{margin-left:16px}
.search{margin-left:31px;fill:none;stroke:#fff;stroke-width:1.400}
.grip{width:4px;height:16px;border:1px solid #49697a;border-width:0 1px}
.g1{margin-left:21px}
.links{width:28px;margin-left:10px;letter-spacing:-.4px}
.g2{margin-left:132px}
.app-btn{width:49px;height:40px;display:flex;align-items:center;justify-content:center;flex:none}
.pc{padding-right:2px}
.g2+.app-btn{margin-left:12px}
.run{border-bottom:2px solid #9edcfa;width:41px;margin:0 4px;padding-top:2px}
.active{background:#1b6890;width:48px;margin:0 0 0 1px}
.tb{background:#fff;width:22px;height:22px;padding:1px}
.tray{margin-left:auto;display:flex;align-items:center;height:40px}
.desk{margin-left:10px;width:44px;letter-spacing:-.5px}
.more{font-size:16px;margin:-22px 0 0 6px;width:10px}
.sys{margin-left:10px;fill:none;stroke:#fff}
.eng{margin-left:6px;width:25px;letter-spacing:-.5px}
.clock{text-align:center;line-height:19px;width:64px;margin-left:8px;letter-spacing:-.4px}
.note{margin:4px 0 0 14px;fill:none}
.note text{fill:#fff;font-size:12px;text-anchor:middle}
.peek{width:1px;height:40px;background:#5b7888;margin:0 4px 0 13px}
```
